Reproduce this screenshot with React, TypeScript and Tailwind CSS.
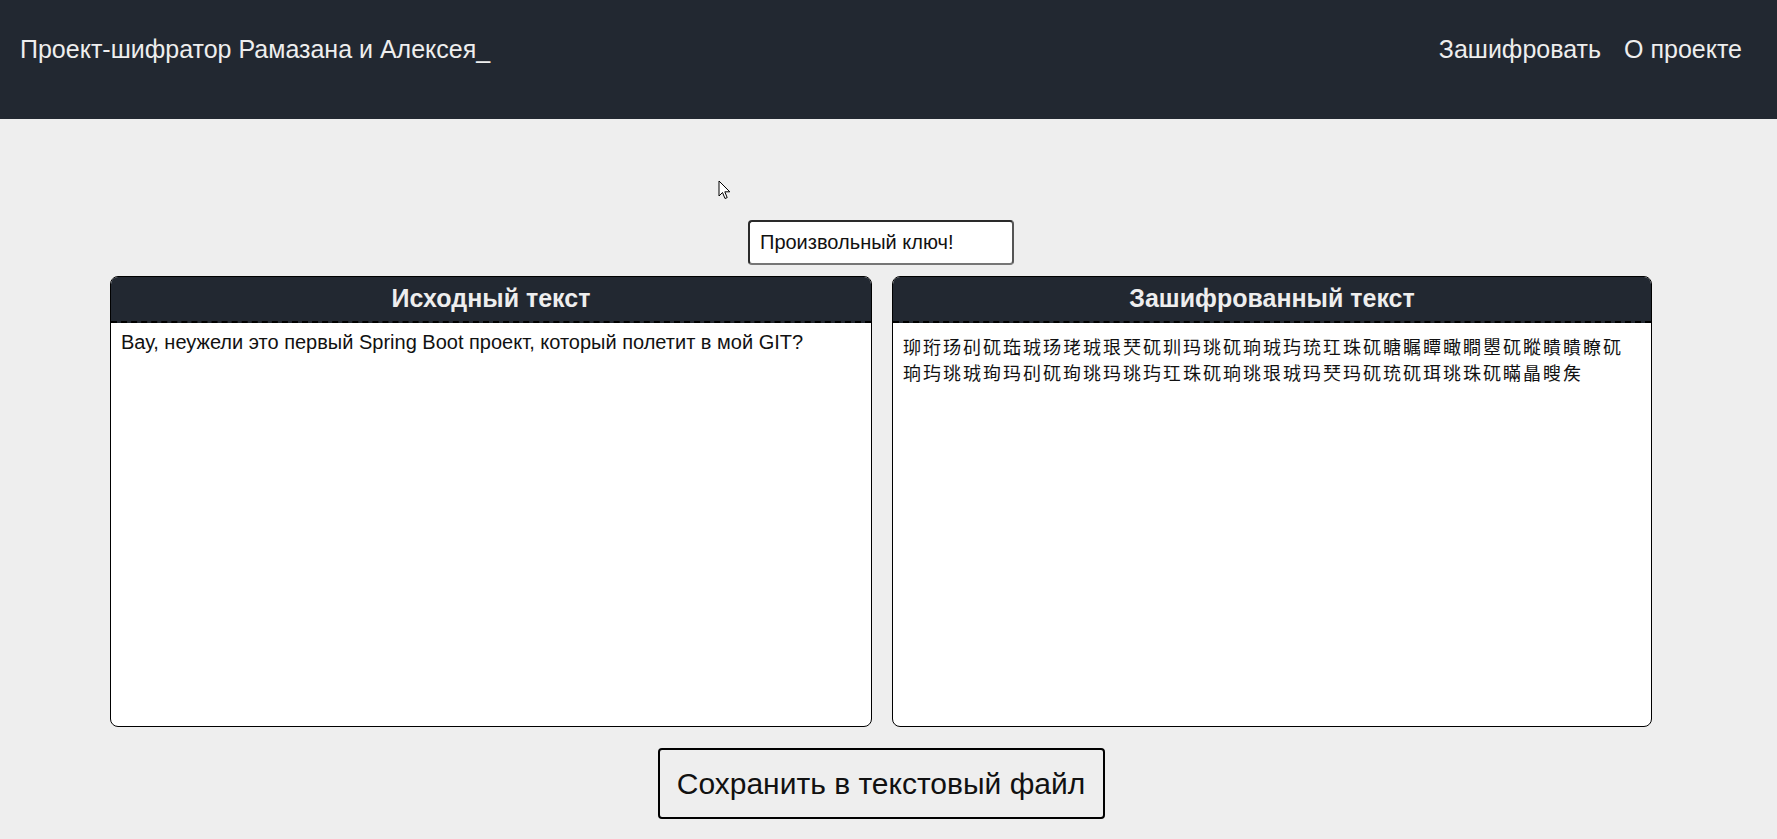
import React from "react";

const SOURCE_TEXT =
  "Вау, неужели это первый Spring Boot проект, который полетит в мой GIT?";

const encrypt = (text: string) =>
  text
    .split("")
    .map((c) => String.fromCharCode(c.charCodeAt(0) ^ 0x77d9))
    .join("");

function Cursor() {
  return (
    <svg
      className="absolute left-[718px] top-[180px]"
      width="14"
      height="21"
      viewBox="0 0 14 21"
    >
      <path
        d="M1 1 L1 16 L4.5 12.5 L7 18.5 L9.2 17.6 L6.8 11.8 L11.8 11.8 Z"
        fill="#fff"
        stroke="#000"
        strokeWidth="1"
        strokeLinejoin="round"
      />
    </svg>
  );
}

function Panel({
  title,
  width,
  children,
}: {
  title: string;
  width: string;
  children: React.ReactNode;
}) {
  return (
    <div
      className={`${width} flex h-[451px] flex-col overflow-hidden rounded-[8px] border border-black bg-white`}
    >
      <div className="flex h-[46px] shrink-0 items-center justify-center border-b-2 border-dashed border-black bg-[#222831] text-[25px] font-bold text-[#eeeeee]">
        {title}
      </div>
      <div className="flex-1 px-[10px] pt-[8px]">{children}</div>
    </div>
  );
}

export default function App() {
  const [key, setKey] = React.useState("Произвольный ключ!");
  const encrypted = encrypt(SOURCE_TEXT);

  return (
    <div
      className="relative min-h-[839px] bg-[#eeeeee]"
      style={{ fontFamily: '"Liberation Sans", Arial, sans-serif' }}
    >
      <header className="flex h-[119px] items-start justify-between bg-[#222831] pl-[20px] pr-[35px] pt-[31px] text-[25px] text-[#eeeeee]">
        <div>Проект-шифратор Рамазана и Алексея_</div>
        <nav className="flex gap-[23px]">
          <a href="#">Зашифровать</a>
          <a href="#">О проекте</a>
        </nav>
      </header>

      <main className="flex w-[1762px] flex-col items-center">
        <input
          value={key}
          onChange={(e) => setKey(e.target.value)}
          className="mt-[101px] h-[45px] w-[266px] rounded-[4px] border-2 border-[#2a2a2a] border-b-[#767676] border-r-[#555] bg-white px-[10px] text-[20px] text-[#111] outline-none"
        />

        <div className="mt-[11px] flex gap-[20px]">
          <Panel title="Исходный текст" width="w-[762px]">
            <p className="text-[20px] leading-[23px] text-[#111]">
              {SOURCE_TEXT}
            </p>
          </Panel>
          <Panel title="Зашифрованный текст" width="w-[760px]">
            <p
              className="mt-[2px] break-all text-[18px] leading-[26px] tracking-[2px] text-[#111]"
              style={{
                fontFamily:
                  '"Noto Sans CJK SC", "Liberation Sans", sans-serif',
              }}
            >
              {encrypted}
            </p>
          </Panel>
        </div>

        <button
          type="button"
          className="mt-[21px] h-[71px] w-[447px] rounded-[4px] border-2 border-black bg-[#eeeeee] text-[30px] text-[#111]"
        >
          Сохранить в текстовый файл
        </button>
      </main>

      <Cursor />
    </div>
  );
}
